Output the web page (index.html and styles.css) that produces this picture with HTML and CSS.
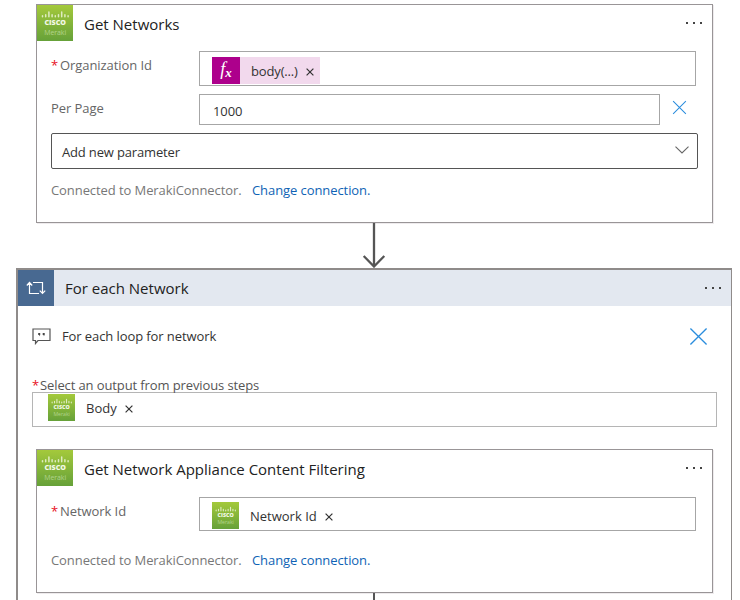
FILE: index.html
```
<!DOCTYPE html>
<html lang="en">
<head>
<meta charset="utf-8">
<title>Logic App Designer</title>
<link rel="stylesheet" href="styles.css">
</head>
<body>
<svg class="defs" width="0" height="0" aria-hidden="true">
  <defs>
    <linearGradient id="green" x1="0" y1="0" x2="0" y2="1">
      <stop offset="0" stop-color="#a4c93b"/>
      <stop offset="1" stop-color="#66a139"/>
    </linearGradient>
    <symbol id="meraki" viewBox="0 0 36 36">
      <rect width="36" height="36" fill="url(#green)"/>
      <path d="M5.500 10.800v1M8.700 9.800v2M11.900 7v4.800M15.100 9.800v2M18.300 10.800v1M21.500 9.800v2M24.700 7v4.800M27.900 9.800v2M31.100 10.800v1" stroke="#dfecc0" stroke-width="1.500" stroke-linecap="round"/>
      <text class="logo-cisco" x="18.200" y="19.800" text-anchor="middle" textLength="21.500" lengthAdjust="spacingAndGlyphs">CISCO</text>
      <text class="logo-meraki" x="18.200" y="29.500" text-anchor="middle" textLength="22">Meraki</text>
    </symbol>
    <symbol id="cross" viewBox="0 0 20 20">
      <path d="M1.500 1.500l17 17M18.500 1.500l-17 17" fill="none" stroke="#2b8ddd" stroke-width="1.400"/>
    </symbol>
    <symbol id="x" viewBox="0 0 8 8">
      <path d="M.6.6l6.800 6.800M7.400.6L.6 7.400" fill="none" stroke="#333" stroke-width="1.200"/>
    </symbol>
    <symbol id="dots" viewBox="0 0 18 4">
      <path d="M1 1h2v2H1zM8 1h2v2H8zM15 1h2v2h-2z" fill="#444"/>
    </symbol>
  </defs>
</svg>
<main class="canvas">
  <section class="card card-networks">
    <header class="card-header">
      <svg class="brand"><use href="#meraki"/></svg>
      <h2 class="title t-networks">Get Networks</h2>
      <svg class="dots"><use href="#dots"/></svg>
    </header>
    <div class="row row-org">
      <label class="label"><span class="req">*</span><span class="t-org">Organization Id</span></label>
      <div class="field">
        <span class="token fx"><span class="fx-icon">f<sub>x</sub></span><span class="token-text t-body-fn">body(...)</span><svg class="x"><use href="#x"/></svg></span>
      </div>
    </div>
    <div class="row row-page">
      <label class="label">Per Page</label>
      <div class="field short"><span class="value">1000</span></div>
      <svg class="remove"><use href="#cross"/></svg>
    </div>
    <div class="dropdown">
      <span class="t-add">Add new parameter</span>
      <svg class="chevron" viewBox="0 0 14 8"><path d="M.5.600L7 7 13.500.600" fill="none" stroke="#666" stroke-width="1.100"/></svg>
    </div>
    <p class="connection"><span class="t-conn">Connected to MerakiConnector.</span><a class="t-change">Change connection.</a></p>
  </section>
  <svg class="arrow" viewBox="0 0 24 45"><path d="M12 0v43M1.700 33L12 43.500 22.300 33" fill="none" stroke="#555" stroke-width="2.300"/></svg>
  <section class="scope">
    <header class="scope-header">
      <span class="loop">
        <svg viewBox="0 0 20 14"><path d="M3.500 2v10.500H13M.8 4.500L3.500 1.500l2.700 3M7 1.500h9.500v11M13.800 9.700l2.700 2.800 2.700-2.800" fill="none" stroke="#fff" stroke-width="1.200"/></svg>
      </span>
      <h2 class="title t-foreach">For each Network</h2>
      <svg class="dots"><use href="#dots"/></svg>
    </header>
    <div class="comment">
      <svg class="bubble" viewBox="0 0 19 17"><path d="M1 1h17v11.500H6L3.500 15.500V12.500H1z" fill="none" stroke="#555" stroke-width="1.200"/><path d="M6.200 5h2v2l-1 1.200V7h-1zM10.700 5h2v2l-1 1.200V7h-1z" fill="#444"/></svg>
      <span class="t-comment">For each loop for network</span>
      <svg class="dismiss"><use href="#cross"/></svg>
    </div>
    <label class="output-label"><span class="req">*</span><span class="t-select">Select an output from previous steps</span></label>
    <div class="field output">
      <span class="token"><svg class="token-brand"><use href="#meraki"/></svg><span class="token-text t-body">Body</span><svg class="x"><use href="#x"/></svg></span>
    </div>
    <section class="card card-filter">
      <header class="card-header">
        <svg class="brand"><use href="#meraki"/></svg>
        <h2 class="title t-filter">Get Network Appliance Content Filtering</h2>
        <svg class="dots"><use href="#dots"/></svg>
      </header>
      <div class="row row-net">
        <label class="label"><span class="req">*</span><span class="t-netlabel">Network Id</span></label>
        <div class="field">
          <span class="token"><svg class="token-brand"><use href="#meraki"/></svg><span class="token-text t-netid">Network Id</span><svg class="x"><use href="#x"/></svg></span>
        </div>
      </div>
      <p class="connection"><span class="t-conn">Connected to MerakiConnector.</span><a class="t-change">Change connection.</a></p>
    </section>
    <div class="stem"></div>
  </section>
</main>
</body>
</html>
```
FILE: styles.css
```
* { box-sizing: border-box; }
body {
  margin: 0;
  background: #fff;
  color: #333;
  font: 13px/18px "Open Sans", "Noto Sans", sans-serif;
  white-space: nowrap;
}
svg { display: block; flex: none; }
.defs { position: absolute; }
.canvas { height: 600px; overflow: hidden; padding: 4px 8px 0 16px; }
.card { width: 677px; border: 1px solid #999597; background: #fff; box-shadow: 1px 1px 0 #eeebed; }
.card-networks { height: 219px; margin-left: 20px; }
.card-header, .scope-header { display: flex; align-items: center; height: 36px; }
.card-header { padding-right: 9px; }
.brand { width: 36px; height: 36px; }
.logo-cisco { font: 800 6.5px "Open Sans", sans-serif; fill: #f3f8e6; }
.logo-meraki { font: 400 7px "Open Sans", sans-serif; fill: #b3d38c; }
.title { margin: 0 0 0 11px; font-size: 15px; line-height: 20px; font-weight: 400; color: #222; padding-top: 2px; }
.t-foreach { padding-top: 0; }
.dots { width: 18px; height: 4px; margin-left: auto; }
.row { display: flex; padding-left: 14px; }
.label { width: 148px; flex: none; color: #666; padding-top: 5px; letter-spacing: -0.07px; }
.req { display: inline-block; width: 9px; color: #e81123; }
.field { width: 497px; height: 35px; border: 1px solid #a6a6a6; display: flex; padding-left: 12px; color: #333; }
.row-org { margin-top: 10px; }
.row-page { margin-top: 8px; }
.short { width: 461px; height: 31px; align-items: center; }
.value { padding: 2px 0 0 1px; letter-spacing: -0.1px; }
.remove { width: 15px; height: 15px; margin: 6px 0 0 12px; }
.token { display: flex; align-items: center; height: 27px; }
.fx { margin-top: 5px; width: 108px; background: #f2d9ed; }
.fx-icon { width: 28px; height: 27px; background: #ad008c; color: #fff; font: italic 18px/24px "Liberation Serif", serif; text-align: center; }
.fx-icon sub { font-size: 13px; font-weight: 700; line-height: 0; vertical-align: -2px; }
.token-text { margin: 1px 8px 0 11px; }
.t-body-fn { letter-spacing: -0.15px; }
.x { width: 8px; height: 8px; margin-top: 2px; }
.dropdown { margin: 8px 0 0 14px; width: 647px; height: 36px; border: 1px solid #555; border-radius: 2px; display: flex; align-items: center; padding: 2px 8px 0 10px; }
.t-add { letter-spacing: -0.16px; }
.chevron { width: 14px; height: 8px; margin: -5px 0 0 auto; }
.connection { margin: 12px 0 0 14px; color: #777; display: flex; letter-spacing: -0.08px; }
.connection a { color: #0f63b5; }
.t-conn { width: 201px; }
.arrow { width: 24px; height: 45px; margin-left: 346px; }
.scope { width: 716px; height: 340px; border: solid #8f8b8a; border-width: 2px 1px 0 2px; }
.scope-header { background: #e3e8f0; padding-right: 9px; }
.loop { width: 36px; height: 36px; background: #486991; display: flex; align-items: center; justify-content: center; }
.loop svg { width: 20px; height: 14px; }
.comment { display: flex; align-items: center; height: 60px; padding: 0 23px 0 14px; letter-spacing: -0.09px; }
.bubble { width: 19px; height: 17px; margin-right: 11px; }
.dismiss { width: 19px; height: 19px; margin-left: auto; }
.output-label { display: block; margin: 11px 0 0 14px; height: 15px; line-height: 16px; color: #555; letter-spacing: -0.11px; }
.output-label .req { width: 8px; }
.output { margin-left: 14px; width: 685px; height: 35px; border-color: #b5b5b5; padding: 1px 0 0 15px; }
.token-brand { width: 27px; height: 27px; }
.card-filter { margin: 22px 0 0 18px; height: 144px; }
.row-net { margin-top: 11px; }
.row-net .field { height: 34px; }
.row-net .token { margin-top: 4px; }
.card-filter .connection { margin-top: 20px; }
.stem { width: 2px; height: 20px; margin-left: 355px; background: #555; }
```
